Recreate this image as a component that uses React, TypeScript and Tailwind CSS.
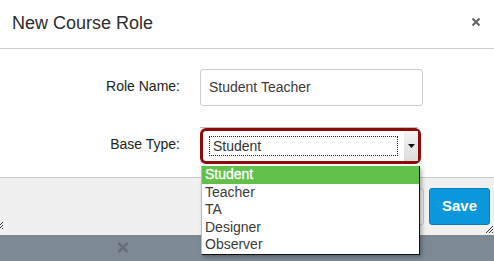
import React from 'react';

const roles = ['Student', 'Teacher', 'TA', 'Designer', 'Observer'];

const ResizeGrip = () => (
  <svg width="8" height="8" viewBox="0 0 8 8" className="block">
    <path d="M1 8 L8 1 M4 8 L8 4 M7 8 L8 7" stroke="#333" strokeWidth="1" />
  </svg>
);

const App = () => {
  return (
    <div
      className="relative w-[494px] h-[261px] overflow-hidden bg-[#7d8a95] text-[#333]"
      style={{ fontFamily: '"Liberation Sans", Arial, sans-serif' }}
    >
      {/* Dialog */}
      <div className="bg-white">
        {/* Header */}
        <div className="flex items-center justify-between h-[49px] border-b border-[#cfcfcf] pl-3 pr-[13px]">
          <h2 className="text-[18px] font-normal text-[#2d2d2d] pb-[1px]">New Course Role</h2>
          <svg width="10" height="10" viewBox="0 0 10 10" className="mb-[4px]">
            <path d="M1.5 1.5 L8.5 8.5 M8.5 1.5 L1.5 8.5" stroke="#666" strokeWidth="2.2" />
          </svg>
        </div>

        {/* Body */}
        <div className="flex flex-col gap-[21px] pt-[20px] pb-[13px]">
          <div className="flex items-center">
            <label className="w-[180px] text-right text-[14px] text-[#222] pb-[3px]">Role Name:</label>
            <div className="ml-[20px] w-[223px] h-[37px] border border-[#cccccc] rounded-[3px] flex items-center px-[8px] text-[14px] text-[#3a3a3a]">
              Student Teacher
            </div>
          </div>
          <div className="flex items-center">
            <label className="w-[180px] text-right text-[14px] text-[#222] pb-[3px]">Base Type:</label>
            <div className="ml-[20px] flex flex-col">
              <div className="h-px w-[218px] bg-[#bdbdbd]" />
              <div className="w-[221px] h-[36px] rounded-[6px] border-[3px] border-[#8e0b0b] bg-white flex items-center pl-[6px]">
                <div className="w-[189px] h-[20px] border border-dotted border-[#222] flex items-center pl-[3px] text-[14px] text-[#333]">
                  Student
                </div>
                <div className="ml-auto w-[14px] h-full bg-gradient-to-b from-[#f4f4f4] to-[#dcdcdc] flex items-center justify-center">
                  <svg width="7" height="4" viewBox="0 0 7 4">
                    <path d="M0 0 L7 0 L3.5 4 Z" fill="#111" />
                  </svg>
                </div>
              </div>
            </div>
          </div>
        </div>

        {/* Footer */}
        <div className="relative h-[58px] border-t border-[#c9c9c9] bg-[#f0f0f0] flex items-start justify-end gap-[5px] pt-[10px] pr-[4px]">
          <button className="w-[70px] h-[37px] rounded-[3px] border border-[#c8c8c8] bg-[#f5f5f5] text-[14px] text-[#333]">
            Cancel
          </button>
          <button className="w-[61px] h-[37px] rounded-[3px] border border-[#0a7cc0] bg-[#0a97dc] text-[15px] font-bold text-white">
            Save
          </button>
          <div className="absolute right-[1px] bottom-[2px]">
            <ResizeGrip />
          </div>
          <div className="absolute -left-[5px] top-[43px]">
            <ResizeGrip />
          </div>
        </div>
      </div>

      {/* Overlay close */}
      <div className="flex h-[25px] items-center pl-[117px]">
        <svg width="12" height="11" viewBox="0 0 12 11">
          <path d="M1.5 1 L10.5 10 M10.5 1 L1.5 10" stroke="#666e78" strokeWidth="2.6" />
        </svg>
      </div>

      {/* Open select list */}
      <ul className="absolute left-[201px] top-[166px] w-[219px] h-[89px] bg-white border-l border-[#bbb] border-r border-b border-r-[#111] border-b-[#111] shadow-[2px_2px_4px_rgba(0,0,0,0.3)] text-[14px] leading-[17.5px]">
        {roles.map((r, i) => (
          <li
            key={r}
            className={
              i === 0
                ? 'bg-[#62c04a] text-white [-webkit-text-stroke:0.3px_white] pl-[3px] h-[17.5px]'
                : 'text-[#3a3a3a] pl-[3px] h-[17.5px]'
            }
          >
            {r}
          </li>
        ))}
      </ul>
    </div>
  );
};

export default App;
